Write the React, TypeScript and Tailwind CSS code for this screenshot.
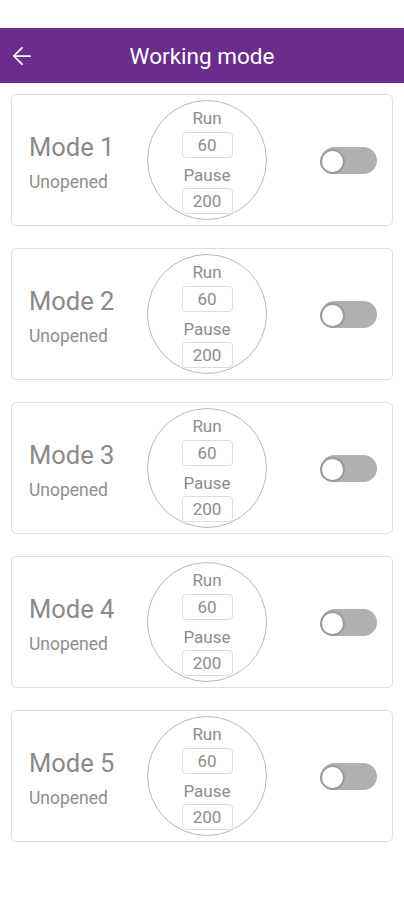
import { ArrowLeft } from "lucide-react";

const modes = [1, 2, 3, 4, 5];

const Toggle = () => {
  return (
    <div className="relative w-[56px] h-[27px] rounded-full bg-[#b0b0b0] flex items-center">
      <div className="w-[25px] h-[25px] rounded-full bg-white border-2 border-[#9a9a9a] -ml-[1px] mt-[2px]" />
    </div>
  );
};

const ValueBox = ({ value }: any) => (
  <div className="w-[51px] h-[26px] border border-[#dcdcdc] rounded-[4px] flex items-center justify-center text-[17px] text-[#8c8c8c] leading-none">
    {value}
  </div>
);

const ModeCard = ({ index }: any) => {
  return (
    <div className="h-[132px] border border-[#dedede] rounded-[5px] flex items-center pl-[17px] pr-[15px]">
      <div className="w-[118px] mt-[4px]">
        <div className="text-[25.5px] leading-[28px] text-[#8a8a8a]">Mode {index}</div>
        <div className="text-[17.5px] leading-[20px] text-[#8e8e8e] mt-[11px]">Unopened</div>
      </div>
      <div className="w-[120px] h-[120px] rounded-full border border-[#b8b8b8] flex flex-col items-center pt-[7px] shrink-0">
        <div className="text-[17px] leading-[20px] text-[#8c8c8c]">Run</div>
        <div className="mt-[4px]">
          <ValueBox value="60" />
        </div>
        <div className="text-[17px] leading-[20px] text-[#8c8c8c] mt-[7px]">Pause</div>
        <div className="mt-[3px]">
          <ValueBox value="200" />
        </div>
      </div>
      <div className="flex-1 flex justify-end">
        <Toggle />
      </div>
    </div>
  );
};

const App = () => {
  return (
    <div className="w-[404px] h-[900px] bg-white font-['Roboto',sans-serif]">
      <div className="h-[28px]" />
      <div className="h-[55px] bg-[#6a2d8c] flex items-center relative pt-[3px]">
        <ArrowLeft className="absolute left-[8px] top-[14px] w-[28px] h-[28px] text-white" strokeWidth={1.5} />
        <div className="flex-1 text-center text-white text-[22.5px]">Working mode</div>
      </div>
      <div className="px-[11px] pt-[11px] flex flex-col gap-[22px]">
        {modes.map((m) => (
          <ModeCard key={m} index={m} />
        ))}
      </div>
    </div>
  );
};

export default App;
